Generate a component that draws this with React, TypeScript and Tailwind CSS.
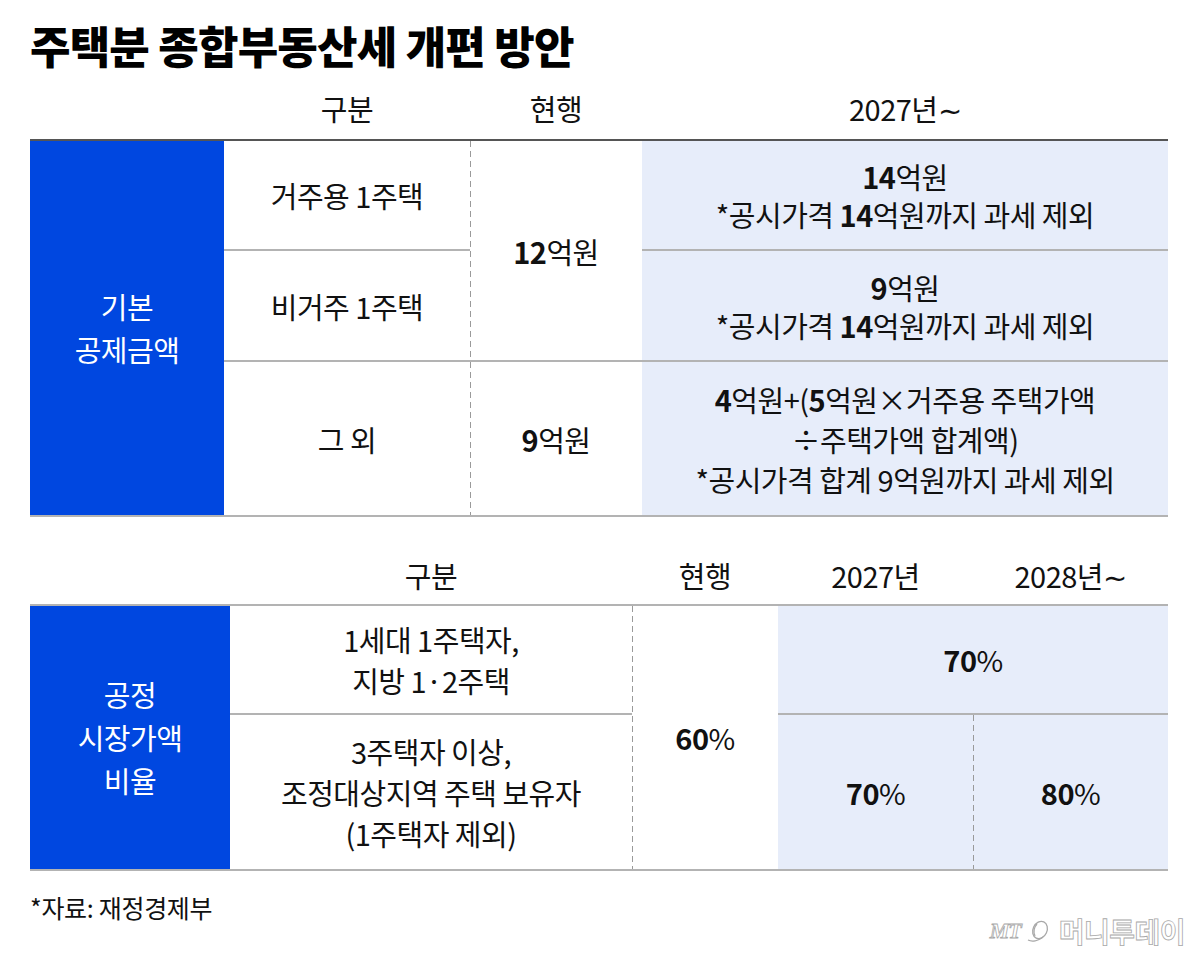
import React from "react";

const dash =
  "bg-[repeating-linear-gradient(to_bottom,#9a9a9a_0_6px,transparent_6px_10px)] bg-no-repeat bg-[length:1px_100%] bg-left";

const cell = "flex flex-col items-center justify-center text-center";
const line = "border-b-2 border-[#b3b3b3]";
const tint = "bg-[#e7edfa]";

function B({ children }: { children: React.ReactNode }) {
  return <span className="font-bold">{children}</span>;
}

function Logo() {
  return (
    <div className="flex items-center gap-[4px] text-white [-webkit-text-stroke:0.8px_#a8a8a8]">
      <span className="font-['Liberation_Serif',serif] text-[22px] font-bold italic leading-none tracking-[-1px]">
        MT
      </span>
      <svg width="26" height="24" viewBox="0 0 26 24" fill="none" stroke="#a8a8a8" strokeWidth="1.3">
        <ellipse cx="15" cy="11" rx="7" ry="9" transform="rotate(25 15 11)" />
        <path d="M3 21c4 2 10 1 15-3" />
        <path d="M12 5c-3 3-4 8-2 12" />
      </svg>
      <span className="ml-[4px] text-[28px] font-bold leading-none tracking-[-0.5px]">머니투데이</span>
    </div>
  );
}

export default function App() {
  return (
    <div className="relative w-[1200px] h-[959px] bg-white text-[#111] font-['Noto_Sans_CJK_KR','Noto_Sans',sans-serif] overflow-hidden">
      <div className="pl-[30px]">
        <h1 className="pt-[20px] text-[44px] font-black leading-[50px] tracking-[-0.8px] text-black">
          주택분 종합부동산세 개편 방안
        </h1>

        {/* 기본공제금액 */}
        <div className="grid w-[1138px] grid-cols-[194px_246px_172px_526px] h-[69px] pt-[7px] text-[29px] leading-[41px] tracking-[-0.5px]">
          <div />
          <div className={cell}>구분</div>
          <div className={cell}>현행</div>
          <div className={cell}>2027년∼</div>
        </div>
        <div className="grid w-[1138px] grid-cols-[194px_246px_172px_526px] grid-rows-[110px_111px_153px] border-t-2 border-b-2 border-t-[#555] border-b-[#b3b3b3] text-[29px] leading-[40px] tracking-[-0.5px]">
          <div className={`${cell} row-span-3 bg-[#0047e0] text-white leading-[43px]`}>
            <span>기본</span>
            <span>공제금액</span>
          </div>
          <div className={`${cell} ${line}`}>거주용 1주택</div>
          <div className={`${cell} ${line} ${dash} row-span-2`}>
            <span>
              <B>12</B>억원
            </span>
          </div>
          <div className={`${cell} ${line} ${tint} leading-[38px]`}>
            <span>
              <B>14</B>억원
            </span>
            <span>
              *공시가격 <B>14</B>억원까지 과세 제외
            </span>
          </div>
          <div className={`${cell} ${line}`}>비거주 1주택</div>
          <div className={`${cell} ${line} ${tint} leading-[38px]`}>
            <span>
              <B>9</B>억원
            </span>
            <span>
              *공시가격 <B>14</B>억원까지 과세 제외
            </span>
          </div>
          <div className={cell}>그 외</div>
          <div className={`${cell} ${dash}`}>
            <span>
              <B>9</B>억원
            </span>
          </div>
          <div className={`${cell} ${tint}`}>
            <span>
              <B>4</B>억원+(<B>5</B>억원×거주용 주택가액
            </span>
            <span>÷주택가액 합계액)</span>
            <span>*공시가격 합계 9억원까지 과세 제외</span>
          </div>
        </div>

        {/* 공정시장가액비율 */}
        <div className="grid w-[1138px] grid-cols-[200px_402px_146px_195px_195px] h-[87px] pt-[30px] text-[29px] leading-[41px] tracking-[-0.5px]">
          <div />
          <div className={cell}>구분</div>
          <div className={cell}>현행</div>
          <div className={cell}>2027년</div>
          <div className={cell}>2028년∼</div>
        </div>
        <div className="grid w-[1138px] grid-cols-[200px_402px_146px_195px_195px] grid-rows-[109px_154px] border-y-2 border-[#b3b3b3] text-[29px] leading-[41px] tracking-[-0.5px]">
          <div className={`${cell} row-span-2 bg-[#0047e0] text-white leading-[43px]`}>
            <span>공정</span>
            <span>시장가액</span>
            <span>비율</span>
          </div>
          <div className={`${cell} ${line}`}>
            <span>1세대 1주택자,</span>
            <span>지방 1·2주택</span>
          </div>
          <div className={`${cell} ${dash} row-span-2`}>
            <span>
              <B>60</B>%
            </span>
          </div>
          <div className={`${cell} ${line} ${tint} col-span-2`}>
            <span>
              <B>70</B>%
            </span>
          </div>
          <div className={cell}>
            <span>3주택자 이상,</span>
            <span>조정대상지역 주택 보유자</span>
            <span>(1주택자 제외)</span>
          </div>
          <div className={`${cell} ${tint}`}>
            <span>
              <B>70</B>%
            </span>
          </div>
          <div className={`${cell} ${tint} ${dash}`}>
            <span>
              <B>80</B>%
            </span>
          </div>
        </div>
      </div>

      <div className="flex items-start justify-between pl-[30px] pr-[15px] pt-[20px]">
        <p className="text-[25px] leading-[32px] tracking-[-0.3px]">*자료: 재정경제부</p>
        <div className="mt-[26px]">
          <Logo />
        </div>
      </div>
    </div>
  );
}
